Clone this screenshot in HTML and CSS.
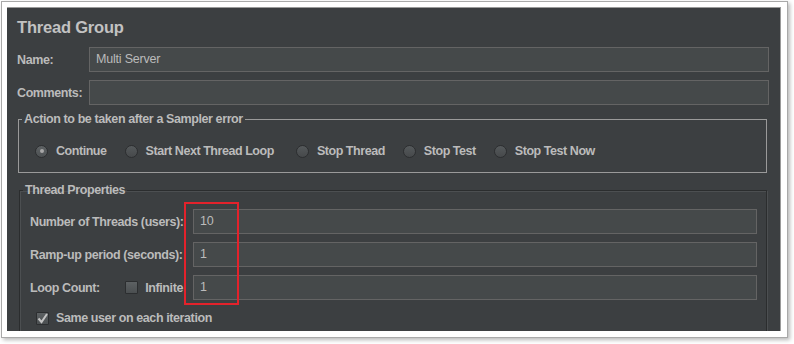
FILE: index.html
```html
<!DOCTYPE html>
<html>
<head>
<meta charset="utf-8">
<link rel="stylesheet" href="styles.css">
</head>
<body>
<div class="frame">
  <div class="panel">
    <div class="title">Thread Group</div>
    <div class="form-grid">
      <label class="lbl">Name:</label>
      <div class="input">Multi Server</div>
      <label class="lbl">Comments:</label>
      <div class="input"></div>
    </div>
    <fieldset class="group action">
      <legend>Action to be taken after a Sampler error</legend>
      <div class="radios">
        <span class="radio-item"><span class="radio on"></span>Continue</span>
        <span class="radio-item"><span class="radio"></span>Start Next Thread Loop</span>
        <span class="radio-item"><span class="radio"></span>Stop Thread</span>
        <span class="radio-item"><span class="radio"></span>Stop Test</span>
        <span class="radio-item"><span class="radio"></span>Stop Test Now</span>
      </div>
    </fieldset>
    <fieldset class="group props">
      <legend>Thread Properties</legend>
      <div class="props-grid">
        <label class="lbl">Number of Threads (users):</label>
        <div class="input">10</div>
        <label class="lbl">Ramp-up period (seconds):</label>
        <div class="input">1</div>
        <div class="loop-cell">
          <span class="lbl">Loop Count:</span>
          <span class="check-item"><span class="checkbox"></span>Infinite</span>
        </div>
        <div class="input">1</div>
        <div class="highlight"></div>
      </div>
      <div class="same-user">
        <span class="check-item"><span class="checkbox checked"><svg viewBox="0 0 13 13" width="13" height="13"><path d="M2.5 6.5 L5.5 10 L11 2" fill="none" stroke="#c4c4c4" stroke-width="2"/></svg></span>Same user on each iteration</span>
      </div>
    </fieldset>
  </div>
</div>
</body>
</html>
```
FILE: styles.css
```css
* { box-sizing: border-box; }
html, body { margin: 0; padding: 0; background: #ffffff; }
body {
  width: 794px;
  height: 344px;
  overflow: hidden;
  font-family: "Liberation Sans", Arial, sans-serif;
}
.frame {
  margin: 1px 0 0 1px;
  width: 787px;
  height: 337px;
  background: #ffffff;
  border: 1px solid #a9a9a9;
  box-shadow: 2px 2px 4px rgba(0, 0, 0, 0.28);
  padding: 5px 5px 5px 5px;
}
.panel {
  width: 774px;
  height: 324px;
  background: #3c3f41;
  border-top: 1px solid #9a9a9a;
  border-right: 1px solid #9a9a9a;
  overflow: hidden;
  padding: 9px 11px 0 10px;
  color: #bbbbbb;
}
.title {
  font-size: 16.5px;
  font-weight: bold;
  line-height: 20px;
  letter-spacing: -0.2px;
  color: #c2c2c2;
}
.lbl {
  font-size: 12.5px;
  font-weight: bold;
  letter-spacing: -0.4px;
  color: #bbbbbb;
  white-space: nowrap;
}
.form-grid {
  margin-top: 10px;
  display: grid;
  grid-template-columns: 64px 1fr;
  column-gap: 8px;
  row-gap: 8px;
  align-items: center;
}
.input {
  height: 25px;
  background: #45494a;
  border: 1px solid #646464;
  color: #bbbbbb;
  font-size: 12.5px;
  letter-spacing: -0.2px;
  line-height: 23px;
  padding: 0 6px;
}
.group {
  margin: 0;
  min-width: 0;
}
.group legend {
  font-size: 12.5px;
  font-weight: bold;
  letter-spacing: -0.4px;
  line-height: 14px;
  padding: 0 2px;
  color: #bbbbbb;
}
.action {
  margin: 7px 2px 0 1px;
  border: 1px solid #9a9a9a;
  padding: 17px 16px 13px 16px;
}
.action legend { margin-left: -13px; }
.radios {
  display: flex;
  align-items: center;
  gap: 18px;
  height: 16px;
}
.radio-item {
  display: flex;
  align-items: center;
  gap: 8px;
  font-size: 12.5px;
  font-weight: bold;
  letter-spacing: -0.45px;
  white-space: nowrap;
}
.radio-item:nth-child(2) { margin-right: 4px; }
.radio {
  width: 13px;
  height: 13px;
  border-radius: 50%;
  background: linear-gradient(#55595b, #46494b);
  border: 1px solid #2c2e30;
  display: flex;
  align-items: center;
  justify-content: center;
}
.radio.on {
  background: linear-gradient(#5e6264, #4d5153);
}
.radio.on::after {
  content: "";
  width: 4px;
  height: 4px;
  border-radius: 50%;
  background: #a8a8a8;
}
.props {
  margin: 10px 0 0 2px;
  width: 748px;
  height: 200px;
  border: 1px solid #2b2d2e;
  box-shadow: 1px 1px 0 #4c4f51, inset 1px 1px 0 #4c4f51;
  padding: 12px 9px 0 10px;
}
.props legend { margin-left: -7px; }
.props-grid {
  position: relative;
  display: grid;
  grid-template-columns: 155px 1fr;
  column-gap: 8px;
  row-gap: 8px;
  align-items: center;
}
.props-grid .input { height: 25px; }
.loop-cell {
  display: flex;
  align-items: center;
  justify-content: space-between;
}
.check-item {
  display: flex;
  align-items: center;
  gap: 7px;
  font-size: 12.5px;
  font-weight: bold;
  letter-spacing: -0.4px;
  white-space: nowrap;
  color: #bbbbbb;
}
.loop-cell .check-item { margin-right: 2px; }
.checkbox {
  width: 13px;
  height: 13px;
  background: linear-gradient(#5d6163, #4b4f51);
  border: 1px solid #2c2e30;
  border-radius: 1px;
  position: relative;
}
.checkbox svg {
  position: absolute;
  left: -1px;
  top: -1px;
}
.highlight {
  position: absolute;
  left: 154px;
  top: -7px;
  width: 55px;
  height: 103px;
  border: 2px solid #e3222b;
}
.same-user {
  margin-top: 11px;
  padding-left: 6px;
}
```
